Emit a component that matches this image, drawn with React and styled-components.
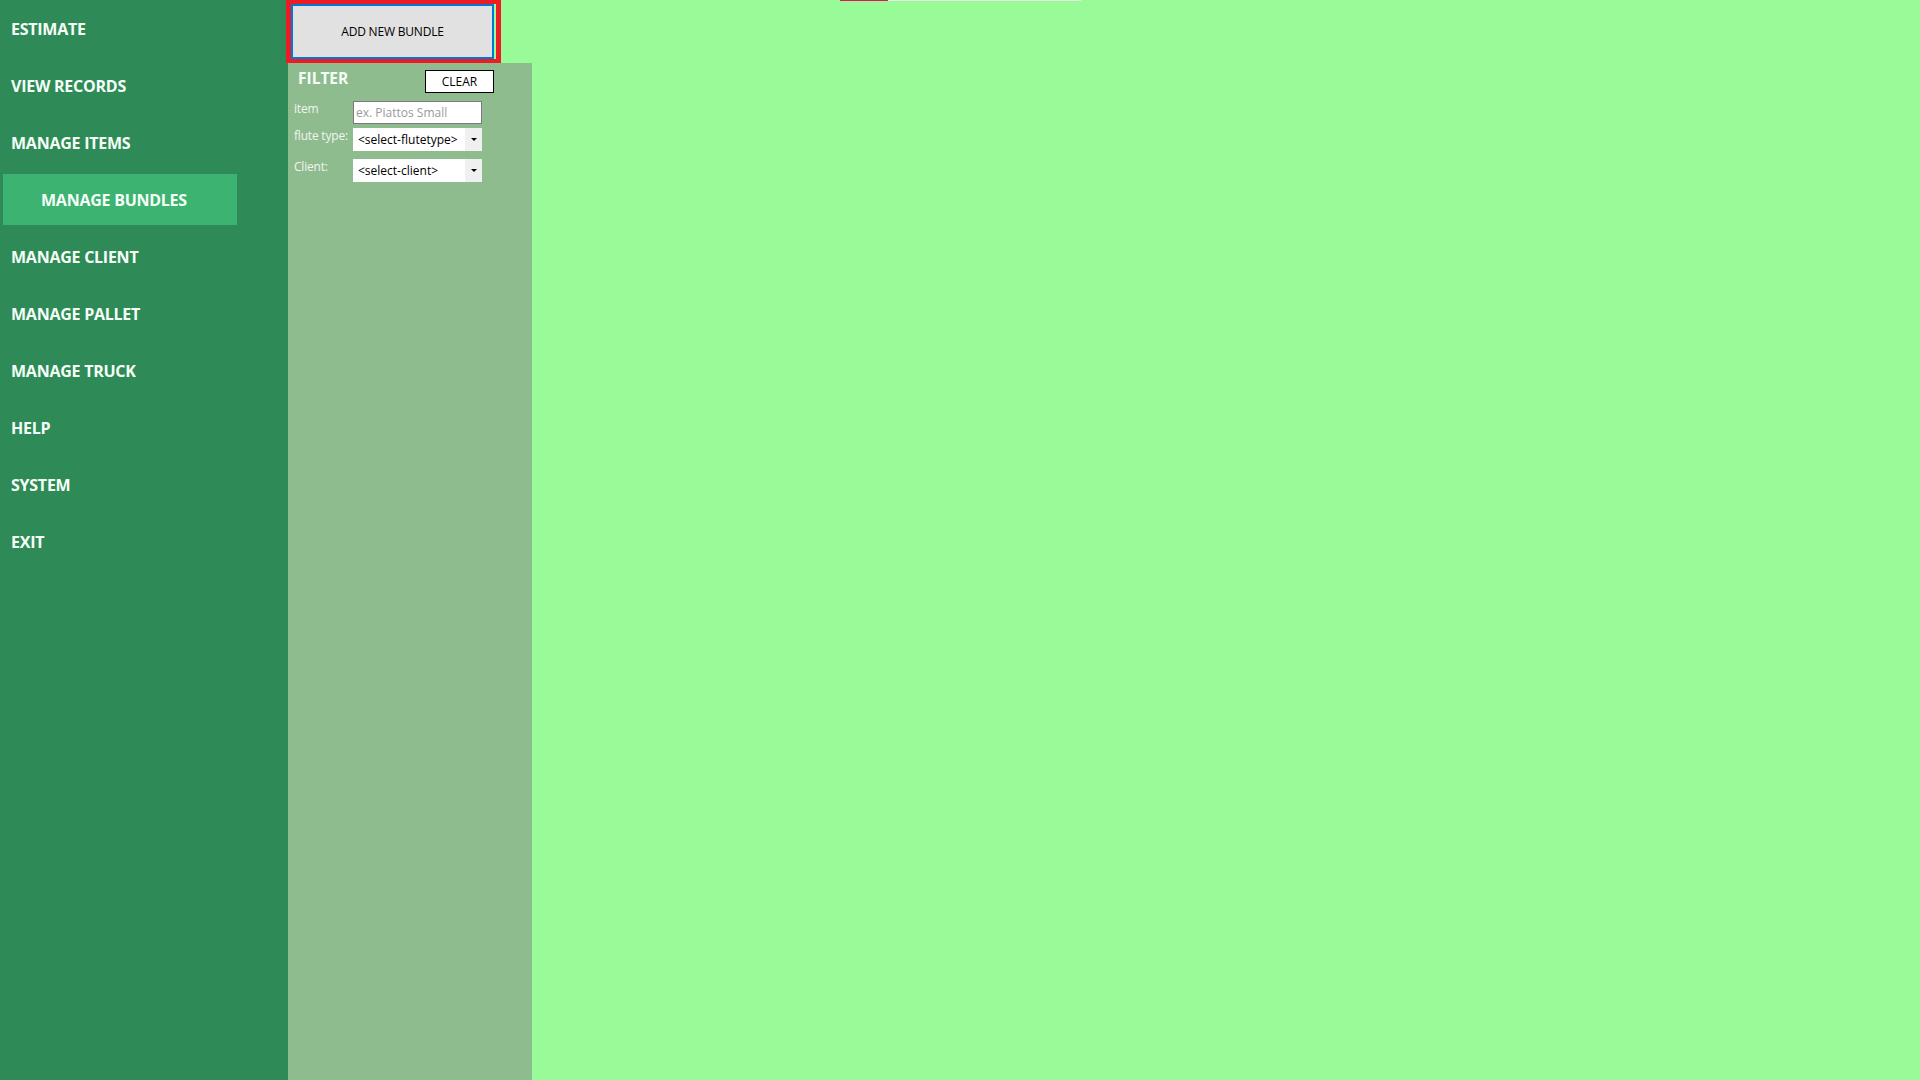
import React from "react";
import styled, { createGlobalStyle } from "styled-components";

const GlobalStyle = createGlobalStyle`
  html, body, #root { height: 100%; }
  body {
    margin: 0;
    overflow: hidden;
    font-family: "Open Sans", "Noto Sans", Arial, sans-serif;
  }
  * { box-sizing: border-box; }
`;

const Page = styled.div`
  position: relative;
  display: flex;
  height: 100vh;
  background: #98fb98;
`;

const Sidebar = styled.nav`
  width: 288px;
  flex-shrink: 0;
  background: #2e8b57;
  display: flex;
  flex-direction: column;
`;

const NavItem = styled.div`
  margin: 3px;
  width: 234px;
  height: 51px;
  display: flex;
  align-items: center;
  padding-left: ${(p) => (p.$active ? "38px" : "8px")};
  background: ${(p) => (p.$active ? "#3cb371" : "transparent")};
  color: #f5fff8;
  font-weight: 700;
  font-size: 16px;
  letter-spacing: -0.25px;
  cursor: pointer;
`;

const Workspace = styled.div`
  width: 244px;
  display: flex;
  flex-direction: column;
`;

const Header = styled.div`
  height: 63px;
  flex-shrink: 0;
`;

const Highlight = styled.div`
  margin-left: -2px;
  width: 215px;
  height: 63px;
  border: 4px solid #ed1c24;
  border-left-width: 5px;
  border-right-width: 5px;
  padding-right: 2px;
`;

const AddButton = styled.button`
  width: 100%;
  height: 100%;
  border: 2px solid #0078d7;
  background: #e1e1e1;
  color: #000;
  font-family: inherit;
  font-size: 12px;
  letter-spacing: -0.2px;
  padding: 0;
  cursor: pointer;
`;

const FilterPanel = styled.section`
  flex: 1;
  background: #8fbc8f;
  padding: 5px 0 0 6px;
`;

const FilterHead = styled.div`
  display: flex;
  align-items: flex-start;
  margin-bottom: 8px;
`;

const FilterTitle = styled.div`
  margin-left: 4px;
  color: #f5fff8;
  font-weight: 700;
  font-size: 15.5px;
  line-height: 20px;
`;

const ClearButton = styled.button`
  margin: 2px 0 0 auto;
  margin-right: 38px;
  width: 69px;
  height: 23px;
  border: 1px solid #000;
  background: #fff;
  color: #000;
  font-family: inherit;
  font-size: 12px;
  padding: 0;
`;

const FieldRow = styled.div`
  display: flex;
  align-items: flex-start;
  margin-top: ${(p) => p.$top || 0}px;
`;

const Label = styled.label`
  width: 59px;
  color: #f0f5f0;
  font-size: 12px;
  line-height: 16px;
  letter-spacing: -0.2px;
  white-space: nowrap;
`;

const TextInput = styled.input`
  width: 129px;
  height: 23px;
  border: 1px solid #7a7a7a;
  background: #fff;
  padding: 0 0 0 2px;
  font-family: inherit;
  font-size: 12px;
  outline: none;
  &::placeholder { color: #9a9a9a; }
`;

const Select = styled.div`
  width: 129px;
  height: 23px;
  background: #fff;
  display: flex;
  align-items: stretch;
  font-size: 12px;
  color: #000;
`;

const SelectValue = styled.span`
  flex: 1;
  display: flex;
  align-items: center;
  padding-left: 5px;
`;

const Arrow = styled.span`
  width: 17px;
  background: #f0f0f0;
  display: flex;
  align-items: center;
  justify-content: center;
  &::after {
    content: "";
    border-left: 3px solid transparent;
    border-right: 3px solid transparent;
    border-top: 3px solid #000;
  }
`;

const Progress = styled.div`
  position: absolute;
  top: 0;
  left: 840px;
  width: 241px;
  height: 1px;
  background: #e4ece4;
  display: flex;
`;

const ProgressFill = styled.div`
  width: 48px;
  background: #e3125c;
`;

const navItems = [
  "ESTIMATE",
  "VIEW RECORDS",
  "MANAGE ITEMS",
  "MANAGE BUNDLES",
  "MANAGE CLIENT",
  "MANAGE PALLET",
  "MANAGE TRUCK",
  "HELP",
  "SYSTEM",
  "EXIT",
];

export default function App() {
  return (
    <>
      <GlobalStyle />
      <Page>
        <Sidebar>
          {navItems.map((n) => (
            <NavItem key={n} $active={n === "MANAGE BUNDLES"}>
              {n}
            </NavItem>
          ))}
        </Sidebar>
        <Workspace>
          <Header>
            <Highlight>
              <AddButton>ADD NEW BUNDLE</AddButton>
            </Highlight>
          </Header>
          <FilterPanel>
            <FilterHead>
              <FilterTitle>FILTER</FilterTitle>
              <ClearButton>CLEAR</ClearButton>
            </FilterHead>
            <FieldRow>
              <Label>item</Label>
              <TextInput placeholder="ex. Piattos Small" />
            </FieldRow>
            <FieldRow $top={4}>
              <Label>flute type:</Label>
              <Select>
                <SelectValue>&lt;select-flutetype&gt;</SelectValue>
                <Arrow />
              </Select>
            </FieldRow>
            <FieldRow $top={8}>
              <Label>Client:</Label>
              <Select>
                <SelectValue>&lt;select-client&gt;</SelectValue>
                <Arrow />
              </Select>
            </FieldRow>
          </FilterPanel>
        </Workspace>
        <Progress>
          <ProgressFill />
        </Progress>
      </Page>
    </>
  );
}
